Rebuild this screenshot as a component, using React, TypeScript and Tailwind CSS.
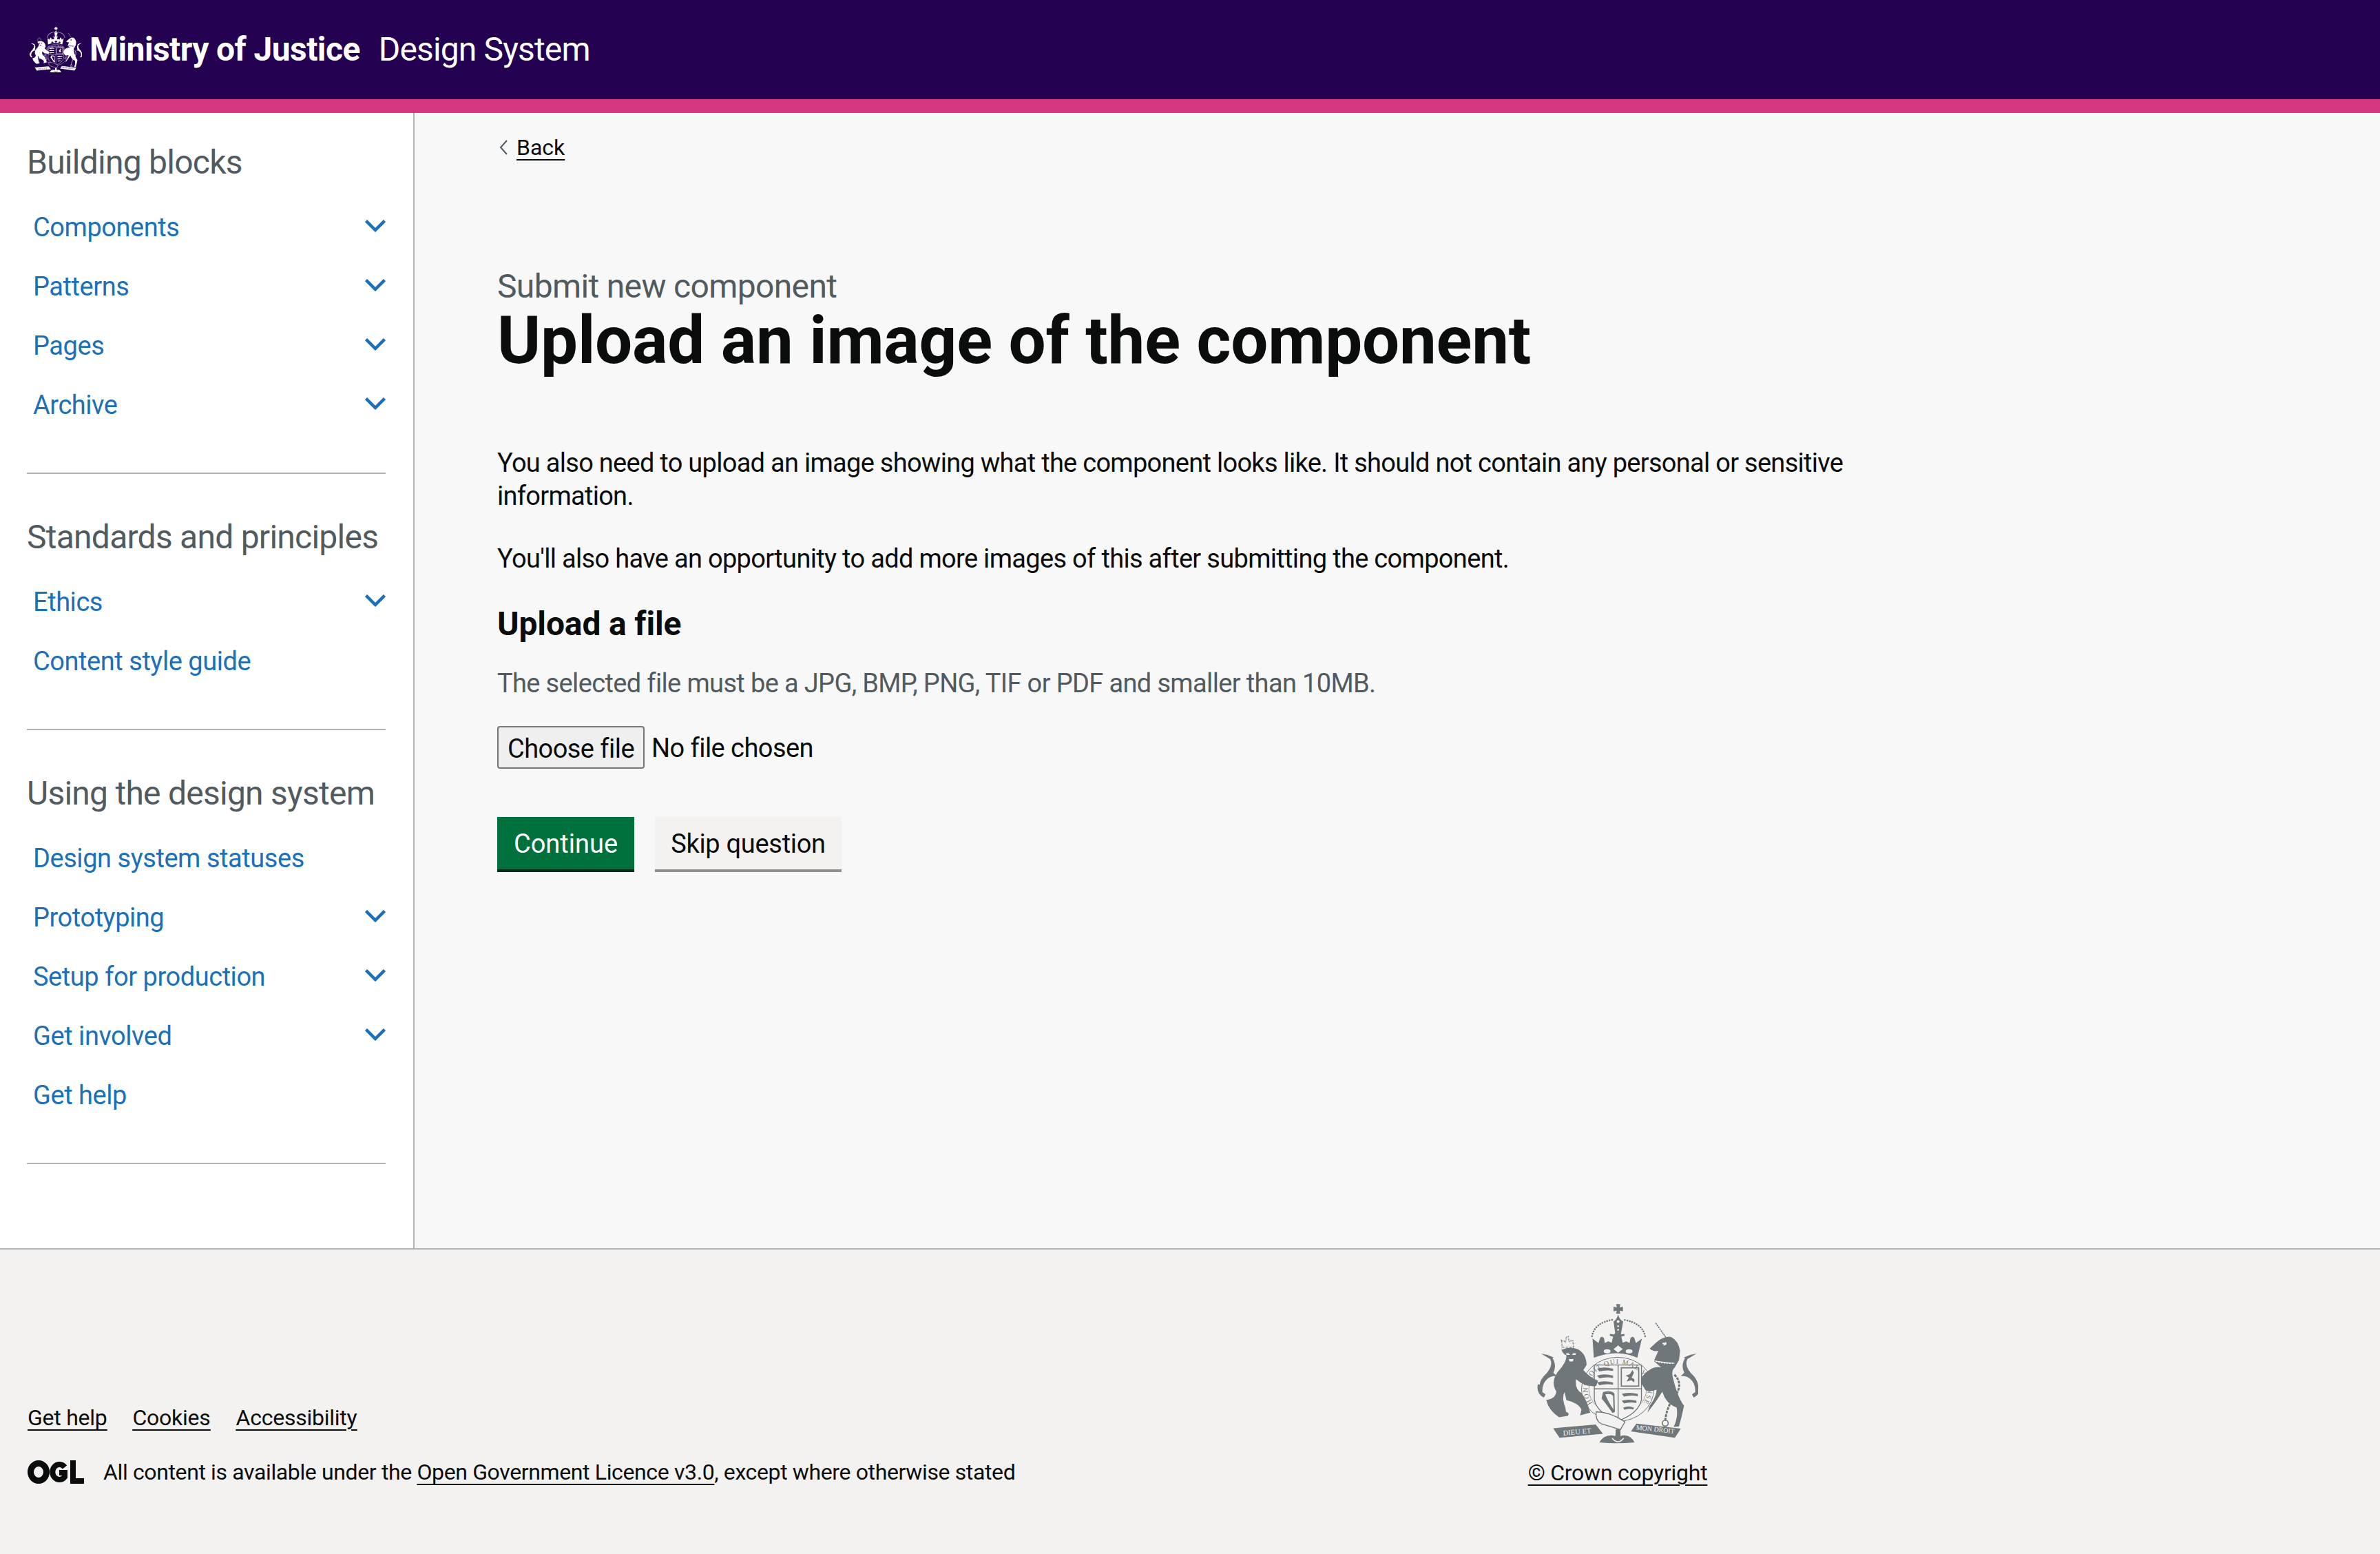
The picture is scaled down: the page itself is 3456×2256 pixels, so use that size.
const font = "font-['Roboto',sans-serif]";

const Crest = ({ id, className, fill, hole }: { id: string; className: string; fill: string; hole: string }) => (
  <svg viewBox="160 92 700 614" className={className} fill={fill}>
    {/* cross and crown */}
    <path d="M504 96h17l-2 14 14-3v20l-14-3 2 14h-17l2-14-14 3v-20l14 3z" />
    <path d="M492 172q14-8 20-30q6 22 22 30l-10 56h-24z" />
    <g fill={hole}>
      <circle cx="512" cy="172" r="6" />
      <circle cx="512" cy="192" r="4" />
      <circle cx="512" cy="208" r="4" />
    </g>
    <path d="M398 236Q408 178 488 164M630 236Q618 178 536 164" fill="none" stroke={fill} strokeWidth="8" strokeLinecap="round" strokeDasharray="0 11" />
    <path d="M400 246l26 20 8-24 8-4 8 6 4 22 14-8 16 6 6-26-14-4v-8l18 2 14-14 14 14 18-2v8l-14 4 6 26 16-6 14 8 4-22 8-6 8 4 8 24 26-20-20 84q-88-40-190 0z" />
    <g fill={hole}>
      <ellipse cx="464" cy="302" rx="15" ry="9" />
      <path d="M512 276l20 16-20 16-20-16z" />
      <ellipse cx="560" cy="302" rx="15" ry="9" />
    </g>
    {/* garter and shield */}
    <ellipse cx="510" cy="468" rx="158" ry="140" fill={hole} stroke={fill} strokeWidth="3" />
    <ellipse cx="510" cy="468" rx="126" ry="106" fill="none" stroke={fill} strokeWidth="2" />
    <path d="M408 362h206v150q-10 60-102 94q-94-34-104-94z" fill={hole} stroke={fill} strokeWidth="4" />
    <path id={id} d="M410 540A130 112 0 1 1 610 540" fill="none" />
    <text fill={fill} fontSize="30" fontFamily="Liberation Serif, serif" letterSpacing="4" textAnchor="middle">
      <textPath href={`#${id}`} startOffset="50%">HONI SOIT QUI MAL Y PENSE</textPath>
    </text>
    <path d="M512 362v244M408 466h206" stroke={fill} strokeWidth="4" />
    <path d="M420 378q30-10 70 0v10q-30-6-60 2zM420 408q30-10 70 0v10q-30-6-60 2zM420 438q30-10 70 0v10q-30-6-60 2zM528 488q30-10 70 0v10q-30-6-60 2zM528 518q30-10 64 0v10q-30-6-54 2zM534 548q26-10 46 0v8q-24-6-40 2z" />
    <rect x="526" y="374" width="76" height="80" fill="none" stroke={fill} strokeWidth="5" />
    <path d="M575 384l-12 18-18 6 14 8-10 18 20-6 14 10v-14l-12-8 10-20z" />
    <path d="M446 480q34-10 50 6l2 80-10 6q-36-50-48-64z" />
    <path d="M456 490q24-4 34 6l2 60q-22-30-36-66z" fill={hole} />
    {/* lion */}
    <path d="M268 284l-4-30 18 6 4-22 8 0 4 22 16-6 4 30z" fill="none" stroke={fill} strokeWidth="5" strokeDasharray="3 3" />
    <path d="M264 296q40-18 74-2q36 22 36 68l-14 22q30 34 64 46l-8 24q-50 4-88-30q-6 44 24 60q26 36 38 86l-44 12 6-26q-16-30-66-40l-8-36q-14 24 4 70l2 16q18 6 8 18l-38 6q-46-30-56-76q40-4 44-36q-26-42 6-86q40-44 38-72q-26-12-22-44z" />
    <path d="M284 310h12l6 8h-16zM310 318l6-8h12l-2 8zM296 336h22l-4 10h-14z" fill={hole} />
    <path d="M175 312q30 4 54 16q-2 6-4 4q20 30 4 64l16 14q-24-2-42 12q-24 20-22 58l14 10-8 14q-34-18-26-58l8 2q2-24 32-52q28-34 14-60z" />
    {/* unicorn */}
    <path d="M676 178l44 62" stroke={fill} strokeWidth="5" strokeDasharray="7 3" />
    <path d="M650 290l30-28q25-22 55-24l10 2q30 15 38 60l-5 40-18 32q-15 13-10 38q20 90 50 130q-10 50-22 90l-23 2q20-42 13-84q-48-18-63-70q-25 42-65 92l10-30q30-40 30-70q-30 10-48 2l-20-32q-2-30 28-50q30-25 60-18l-32-27 20-45q-23 5-38-10z" />
    <path d="M708 268l12-4 2 8-10 2zM664 342q44 14 96 12" fill={hole} stroke={hole} strokeWidth="5" strokeDasharray="8 4" />
    <path d="M758 404q40 40 4 92q-40 50-44 112" fill="none" stroke={fill} strokeWidth="9" strokeDasharray="12 4" />
    <circle cx="718" cy="616" r="13" fill="none" stroke={fill} strokeWidth="5" />
    <path d="M855 312q-30 4-54 16q2 6 4 4q-20 30-4 64l-16 14q24-2 42 12q24 20 22 58l-14 10 8 14q34-18 26-58l-8 2q-2-24-32-52q-28-34-14-60z" />
    {/* ribbons */}
    <path d="M228 638l186-16 32 40-190 18z" />
    <path d="M568 652l24-34 194 22-26 40z" />
    <path d="M416 566q60 0 126 44l-20 34-84-26q-26-12-22-52z" fill={hole} stroke={fill} strokeWidth="4" />
    <path d="M430 700q24-40 70-28l2-30h20v30q40-12 62 28q-80 8-154 0z" />
    <path d="M486 682q26 30 50 0" fill="none" stroke={hole} strokeWidth="5" />
    <text x="272" y="670" fill={hole} fontSize="32" fontFamily="Liberation Serif, serif" transform="rotate(-5 272 670)">DIEU ET</text>
    <text x="590" y="644" fill={hole} fontSize="30" fontFamily="Liberation Serif, serif" transform="rotate(6 590 644)">MON DROIT</text>
  </svg>
);

const Chevron = () => (
  <svg viewBox="0 0 30 18" className="h-[18px] w-[30px]" fill="none" stroke="#1d70b8" strokeWidth="4.5">
    <path d="M1.5 1.5 15 15 28.5 1.5" />
  </svg>
);

const NavItem = ({ label, more }: { label: string; more?: boolean }) => (
  <a className="flex h-[86px] items-center justify-between pl-[9px] text-[38px] tracking-[-0.45px] text-[#1d70b8]">
    <span className="pt-[4px]">{label}</span>
    {more && <Chevron />}
  </a>
);

const NavGroup = ({ title, items }: { title: string; items: [string, boolean?][] }) => (
  <div className="mb-[60px]">
    <h2 className="mb-[21px] h-[60px] text-[48px] leading-[64px] tracking-[-0.75px] whitespace-nowrap text-[#505a5f]">
      {title}
    </h2>
    {items.map(([label, more]) => (
      <NavItem key={label} label={label} more={more} />
    ))}
    <div className="mt-[57px] h-[2px] bg-[#b1b4b6]" />
  </div>
);

const Sidebar = () => (
  <aside className="w-[602px] shrink-0 border-r-2 border-[#b1b4b6] bg-white pt-[40px] pr-[40px] pl-[39px]">
    <NavGroup
      title="Building blocks"
      items={[
        ["Components", true],
        ["Patterns", true],
        ["Pages", true],
        ["Archive", true],
      ]}
    />
    <NavGroup
      title="Standards and principles"
      items={[
        ["Ethics", true],
        ["Content style guide"],
      ]}
    />
    <NavGroup
      title="Using the design system"
      items={[
        ["Design system statuses"],
        ["Prototyping", true],
        ["Setup for production", true],
        ["Get involved", true],
        ["Get help"],
      ]}
    />
  </aside>
);

const Main = () => (
  <main className="min-w-0 flex-1 bg-[#f8f8f8] pt-[30px] pl-[120px] text-[#0b0c0c]">
    <div className="flex h-[40px] items-center">
      <svg viewBox="0 0 12 22" className="mr-[13px] ml-[3px] h-[22px] w-[12px]" fill="none" stroke="#505a5f" strokeWidth="2">
        <path d="M11 1 2 11l9 10" />
      </svg>
      <a className="text-[32px] leading-[40px] underline decoration-2 underline-offset-[6px]">Back</a>
    </div>
    <p className="mt-[150px] h-[60px] text-[48px] leading-[64px] tracking-[-0.65px] text-[#505a5f]">
      Submit new component
    </p>
    <h1 className="h-[100px] text-[96px] leading-[100px] font-bold tracking-[-0.2px]">
      Upload an image of the component
    </h1>
    <p className="mt-[104px] w-[2000px] text-[38px] leading-[48px] tracking-[-0.72px]">
      You also need to upload an image showing what the component looks like. It should not contain any personal or
      sensitive information.
    </p>
    <p className="mt-[43px] text-[38px] leading-[48px] tracking-[-0.68px]">
      You'll also have an opportunity to add more images of this after submitting the component.
    </p>
    <h3 className="mt-[41px] h-[60px] text-[48px] leading-[60px] font-bold tracking-[-0.15px]">Upload a file</h3>
    <p className="mt-[32px] text-[38px] leading-[48px] tracking-[-0.64px] text-[#505a5f]">
      The selected file must be a JPG, BMP, PNG, TIF or PDF and smaller than 10MB.
    </p>
    <div className="mt-[38px] flex h-[62px] items-center gap-[10px] text-[38px] tracking-[-0.55px]">
      <button className="h-[62px] w-[214px] rounded-[4px] border-2 border-[#767676] bg-[#efefef] pt-[3px]">
        Choose file
      </button>
      <span className="pt-[3px]">No file chosen</span>
    </div>
    <div className="mt-[70px] flex gap-[30px]">
      <button className="h-[80px] w-[199px] border-b-[4px] border-[#002d18] bg-[#00703c] pt-[3px] text-[38px] text-white">
        Continue
      </button>
      <button className="h-[80px] w-[271px] border-b-[4px] border-[#929191] bg-[#f3f2f1] pt-[3px] text-[38px] tracking-[-0.3px]">
        Skip question
      </button>
    </div>
  </main>
);

const Footer = () => (
  <footer className="grid h-[444px] grid-cols-[2109px_400px] border-t-2 border-[#b1b4b6] bg-[#f3f2f1] pl-[40px] text-[32px] leading-[40px] text-[#0b0c0c]">
    <div className="pt-[224px]">
      <div className="flex gap-[37px] tracking-[-0.25px] underline decoration-2 underline-offset-[6px]">
        <a>Get help</a>
        <a>Cookies</a>
        <a>Accessibility</a>
      </div>
      <div className="mt-[38px] flex items-center">
        <svg viewBox="0 0 82 34" className="mr-[28px] h-[34px] w-[82px]" fill="none" stroke="#0b0c0c">
          <ellipse cx="16" cy="17" rx="11.5" ry="12.5" strokeWidth="9" />
          <path d="M54 10a10 11 0 1 0 0 14V18h-8" strokeWidth="8" />
          <path d="M66 0v30h16" strokeWidth="8" />
        </svg>
        <span className="pt-[1px] tracking-[-0.37px]">
          All content is available under the{" "}
          <a className="underline decoration-2 underline-offset-[6px]">Open Government Licence v3.0</a>, except where
          otherwise stated
        </span>
      </div>
    </div>
    <div className="flex flex-col items-center pt-[78px]">
      <Crest id="garter-footer" className="h-[204px] w-[234px]" fill="#6f777b" hole="#f3f2f1" />
      <a className="mt-[22px] tracking-[-0.25px] underline decoration-2 underline-offset-[6px]">© Crown copyright</a>
    </div>
  </footer>
);

export default function App() {
  return (
    <div className={`${font} flex min-h-[2256px] flex-col`}>
      <header className="flex h-[164px] shrink-0 items-center border-b-[20px] border-[#d53880] bg-[#240150] pl-[43px] text-[48px] text-white">
        <Crest id="garter-header" className="mr-[11px] h-[68px] w-[76px]" fill="#ffffff" hole="#240150" />
        <span className="mr-[27px] font-bold tracking-[-0.58px]">Ministry of Justice</span>
        <span className="tracking-[-0.85px]">Design System</span>
      </header>
      <div className="flex h-[1648px]">
        <Sidebar />
        <Main />
      </div>
      <Footer />
    </div>
  );
}
